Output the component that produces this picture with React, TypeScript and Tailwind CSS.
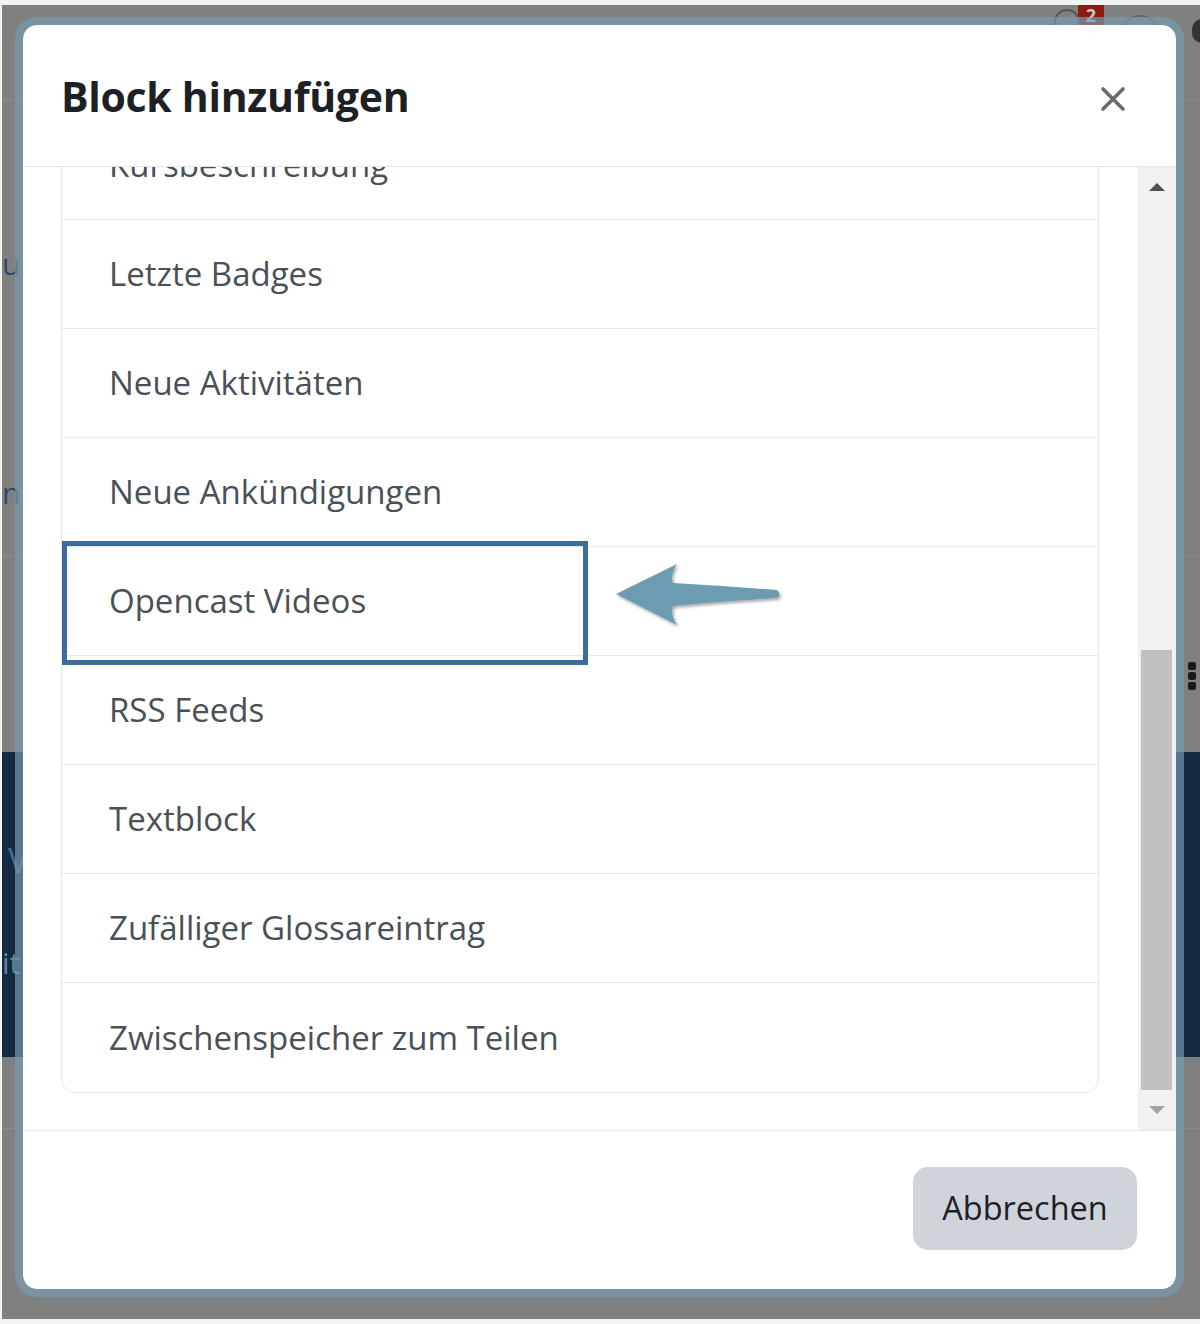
import React from "react";

const items = [
  "Kursbeschreibung",
  "Letzte Badges",
  "Neue Aktivitäten",
  "Neue Ankündigungen",
  "Opencast Videos",
  "RSS Feeds",
  "Textblock",
  "Zufälliger Glossareintrag",
  "Zwischenspeicher zum Teilen",
];

const font = { fontFamily: '"Open Sans", "Noto Sans", Arial, sans-serif' };

function CloseIcon() {
  return (
    <svg width="26" height="26" viewBox="0 0 26 26" fill="none">
      <path d="M3 3L23 23M23 3L3 23" stroke="#6b6b6b" strokeWidth="3.6" strokeLinecap="round" />
    </svg>
  );
}

function Arrow() {
  return (
    <svg width="172" height="72" viewBox="0 0 172 72" fill="none">
      <defs>
        <filter id="sh" x="-10%" y="-20%" width="130%" height="150%">
          <feDropShadow dx="1.5" dy="2" stdDeviation="1.5" floodColor="#000" floodOpacity="0.35" />
        </filter>
      </defs>
      <path
        d="M3 33 L64 3 Q57 14 60 22 Q112 25 164 29 Q169 33 164 37 Q112 40 60 45 Q57 53 64 64 Z"
        fill="#6c9cb2"
        filter="url(#sh)"
      />
    </svg>
  );
}

function Scrollbar() {
  return (
    <div className="w-[38px] shrink-0 bg-[#f1f1f1] flex flex-col">
      <div className="h-[40px] flex items-center justify-center">
        <div className="w-0 h-0 border-l-[8px] border-r-[8px] border-b-[8px] border-l-transparent border-r-transparent border-b-[#505050]" />
      </div>
      <div className="flex-1 flex flex-col justify-end pl-[3px] pr-[4px]">
        <div className="h-[440px] bg-[#c1c1c1]" />
      </div>
      <div className="h-[40px] flex items-center justify-center">
        <div className="w-0 h-0 border-l-[8px] border-r-[8px] border-t-[8px] border-l-transparent border-r-transparent border-t-[#a3a3a3]" />
      </div>
    </div>
  );
}

export default function App() {
  return (
    <div className="w-[1200px] h-[1324px] bg-[#f3f3f3] pt-[5px] pb-[5px] pl-[2px] overflow-hidden" style={font}>
      <div className="relative h-full pt-[12px] pl-[13px] bg-[linear-gradient(to_bottom,#808080_95px,#8b8b8b_95px,#8b8b8b_96px,#808080_96px,#808080_550px,#8b8b8b_550px,#8b8b8b_551px,#808080_551px,#808080_747px,#152a40_747px,#152a40_1052px,#808080_1052px,#808080_1123px,#8b8b8b_1123px,#8b8b8b_1124px,#808080_1124px)]">
        {/* page behind the backdrop */}
        <div className="absolute left-[1076px] top-0 w-[26px] h-[20px] bg-[#8e1b12] text-[#c8c8c8] text-[18px] leading-[20px] text-center font-bold">2</div>
        <div className="absolute left-[1052px] top-[4px] w-[26px] h-[26px] rounded-full border-2 border-[#555]" />
        <div className="absolute left-[1118px] top-[10px] w-[40px] h-[40px] rounded-full border-2 border-[#666]" />
        <div className="absolute left-[1190px] top-[14px] w-[20px] h-[24px] rounded-full bg-[#333]" />
        <div className="absolute left-[1186px] top-[657px] flex flex-col gap-[2px]">
          <div className="w-[8px] h-[8px] rounded-[2px] bg-[#1a1a1a]" />
          <div className="w-[8px] h-[8px] rounded-[2px] bg-[#1a1a1a]" />
          <div className="w-[8px] h-[8px] rounded-[2px] bg-[#1a1a1a]" />
        </div>
        <div className="absolute left-0 top-[236px] text-[30px] text-[#2d4a66]">ur</div>
        <div className="absolute left-0 top-[465px] text-[30px] text-[#2d4a66]">n</div>
        <div className="absolute left-[6px] top-[830px] text-[34px] text-[#4a6b88]">V</div>
        <div className="absolute left-0 top-[935px] text-[30px] text-[#5d87a6]">it</div>

        {/* modal */}
        <div className="relative w-[1169px] h-[1280px] rounded-[22px] border-[8px] border-[rgba(119,156,180,0.68)] bg-white bg-clip-padding flex flex-col overflow-hidden">
          <div className="h-[142px] shrink-0 border-b border-[#e3e5e8] flex items-center justify-between pl-[38px] pr-[50px]">
            <h1 className="text-[41px] font-bold text-[#1d2125] tracking-[-0.3px] pt-[2px]">Block hinzufügen</h1>
            <div className="pt-[6px]">
              <CloseIcon />
            </div>
          </div>

          <div className="flex-1 flex min-h-0">
            <div className="flex-1 pl-[38px] pr-[39px] overflow-hidden">
              <div className="-mt-[57px] border border-[#e6e7e9] rounded-b-[14px]">
                {items.map((item, i) => (
                  <div
                    key={item}
                    className={`relative h-[109px] flex items-center pl-[47px] text-[33px] text-[#495057] ${
                      i < items.length - 1 ? "border-b border-[#e6e7e9]" : ""
                    }`}
                  >
                    {item}
                    {item === "Opencast Videos" && (
                      <>
                        <div className="absolute left-0 top-[-6px] w-[526px] h-[124px] border-[5px] border-[#3e6c98]" />
                        <div className="absolute left-[551px] top-[14px]">
                          <Arrow />
                        </div>
                      </>
                    )}
                  </div>
                ))}
              </div>
            </div>
            <Scrollbar />
          </div>

          <div className="h-[159px] shrink-0 border-t border-[#e3e5e8] flex items-center justify-end pr-[39px] pb-[4px]">
            <button className="w-[224px] h-[83px] rounded-[15px] bg-[#ced4da] text-[32.5px] text-[#1d2125]">
              Abbrechen
            </button>
          </div>
        </div>
      </div>
    </div>
  );
}
